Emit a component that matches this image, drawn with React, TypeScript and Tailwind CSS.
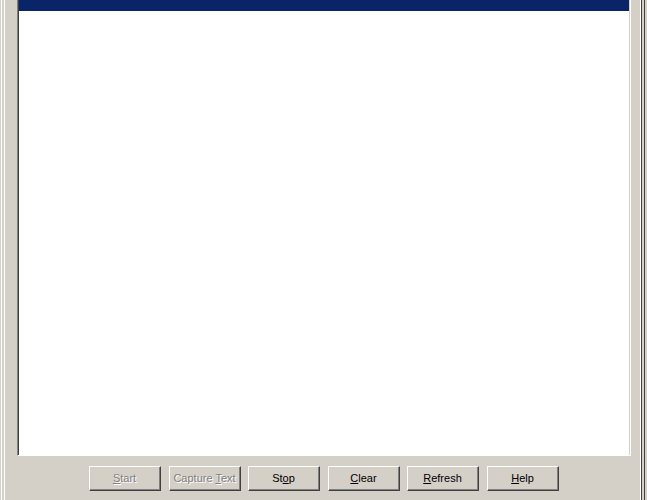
import React from 'react';

const font = { fontFamily: '"Liberation Sans", Tahoma, Arial, sans-serif' };

function Btn({ label, u, disabled }: { label: string; u: number; disabled?: boolean }) {
  const text = (
    <>
      {label.slice(0, u)}
      <span className="underline underline-offset-[1px]">{label[u]}</span>
      {label.slice(u + 1)}
    </>
  );
  return (
    <div className="w-[72px] h-[25px] border-r border-b border-[#404040] border-t border-l border-t-white border-l-white">
      <div className="w-full h-full border-r border-b border-[#808080] flex items-center justify-center">
        {disabled ? (
          <span className="text-[11px] text-[#808080] [text-shadow:1px_1px_0_#ffffff]">{text}</span>
        ) : (
          <span className="text-[11px] text-black">{text}</span>
        )}
      </div>
    </div>
  );
}

export default function App() {
  return (
    <div className="w-[647px] h-[500px] bg-[#d4d0c8] flex overflow-hidden" style={font}>
      <div className="w-[17px] h-full flex">
        <div className="w-[1px] bg-[#d4d0c8]" />
        <div className="w-[1px] bg-white" />
        <div className="w-[2px] bg-[#d4d0c8]" />
        <div className="w-[1px] bg-white" />
      </div>
      <div className="flex-1 flex flex-col">
        <div className="h-[456px] border-l border-t-0 border-r border-b border-l-[#808080] border-r-white border-b-white">
          <div className="h-full border-l border-l-[#404040] border-r border-r-[#d4d0c8] bg-white">
            <div className="h-[11px] bg-[#0a246a]" />
          </div>
        </div>
        <div className="flex-1 flex items-start pt-[10px] pl-[72px] gap-[7px]">
          <Btn label="Start" u={0} disabled />
          <div className="ml-[1px]"><Btn label="Capture Text" u={8} disabled /></div>
          <Btn label="Stop" u={2} />
          <div className="ml-[1px]"><Btn label="Clear" u={0} /></div>
          <Btn label="Refresh" u={0} />
          <div className="ml-[1px]"><Btn label="Help" u={0} /></div>
        </div>
      </div>
      <div className="w-[16px] h-full flex">
        <div className="w-[9px] bg-[#d4d0c8]" />
        <div className="w-[1px] bg-white" />
        <div className="w-[1px] bg-[#404040]" />
        <div className="w-[2px] bg-[#d4d0c8]" />
        <div className="w-[1px] bg-[#404040]" />
        <div className="w-[2px] bg-[#d4d0c8]" />
      </div>
    </div>
  );
}
